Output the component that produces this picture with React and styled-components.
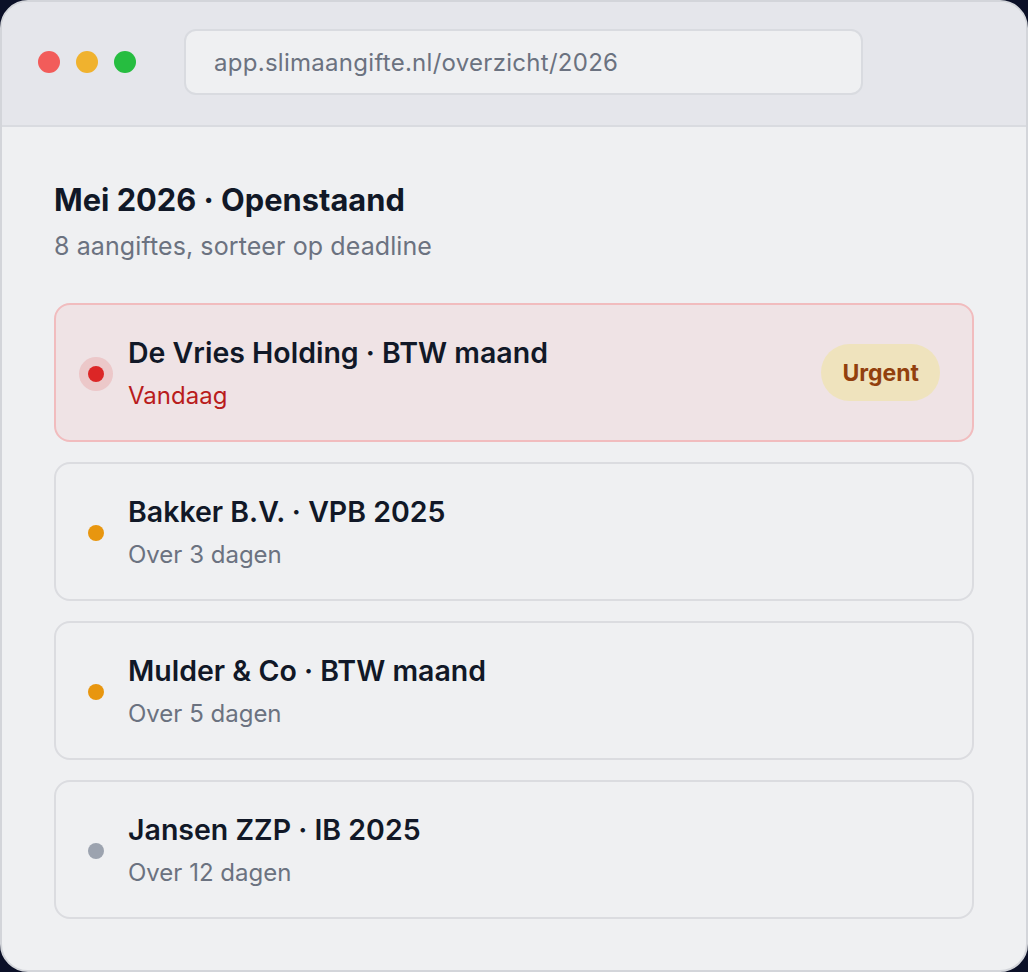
import styled, { createGlobalStyle } from 'styled-components';

const GlobalStyle = createGlobalStyle`
  * { box-sizing: border-box; }
  html, body { margin: 0; padding: 0; background: #0b1027; }
  body { font-family: Inter, 'Noto Sans', sans-serif; }
`;

const Window = styled.div`
  width: 1028px;
  height: 972px;
  display: flex;
  flex-direction: column;
  border: 2px solid #d3d5da;
  border-radius: 28px;
  overflow: hidden;
  background: #eff0f2;
`;

const TitleBar = styled.div`
  height: 125px;
  flex-shrink: 0;
  display: flex;
  align-items: center;
  gap: 48px;
  padding: 0 36px 3px;
  background: #e5e6eb;
  border-bottom: 2px solid #d9dbe0;
`;

const Lights = styled.div`
  display: flex;
  gap: 16px;
`;

const Light = styled.span`
  width: 22px;
  height: 22px;
  border-radius: 50%;
  background: ${p => p.$color};
`;

const UrlBar = styled.div`
  width: 679px;
  height: 66px;
  display: flex;
  align-items: center;
  padding: 0 28px;
  background: #eff0f2;
  border: 2px solid #d9dbe0;
  border-radius: 12px;
  color: #6b7280;
  font-size: 24px;
  letter-spacing: 0.28px;
`;

const Content = styled.main`
  padding: 55px 52px 0 52px;
`;

const Heading = styled.h1`
  margin: 0;
  font-size: 30.8px;
  font-weight: 700;
  line-height: 36px;
  color: #111827;
`;

const Sub = styled.p`
  margin: 13px 0 0;
  font-size: 25px;
  line-height: 30px;
  letter-spacing: 0.1px;
  color: #6b7280;
`;

const List = styled.div`
  margin-top: 42px;
  display: flex;
  flex-direction: column;
  gap: 20px;
`;

const Card = styled.div`
  height: 139px;
  display: flex;
  align-items: center;
  padding: 0 32px 0 23px;
  border-radius: 16px;
  border: 2px solid ${p => (p.$urgent ? '#f1bcbe' : '#dbdce0')};
  background: ${p => (p.$urgent ? '#efe3e5' : '#eff0f2')};
`;

const DotWrap = styled.div`
  width: 34px;
  height: 34px;
  display: flex;
  align-items: center;
  justify-content: center;
  border-radius: 50%;
  background: ${p => (p.$halo ? 'rgba(220, 38, 38, 0.14)' : 'transparent')};
  margin-right: 15px;
  margin-top: 2px;
`;

const Dot = styled.span`
  width: 16px;
  height: 16px;
  border-radius: 50%;
  background: ${p => p.$color};
`;

const Text = styled.div`
  flex: 1;
  display: flex;
  flex-direction: column;
  gap: 11px;
  padding-top: 2px;
`;

const Title = styled.div`
  font-size: 28.5px;
  font-weight: 600;
  line-height: 34px;
  color: #111827;
`;

const When = styled.div`
  font-size: 24px;
  line-height: 30px;
  color: ${p => (p.$urgent ? '#b91c1c' : '#6b7280')};
`;

const Badge = styled.span`
  height: 57px;
  padding: 0 21px;
  display: flex;
  align-items: center;
  border-radius: 29px;
  background: #efe3bd;
  color: #92400e;
  font-size: 23px;
  font-weight: 700;
`;

const items = [
  { title: 'De Vries Holding · BTW maand', when: 'Vandaag', color: '#dc2626', urgent: true },
  { title: 'Bakker B.V. · VPB 2025', when: 'Over 3 dagen', color: '#e8960f' },
  { title: 'Mulder & Co · BTW maand', when: 'Over 5 dagen', color: '#e8960f' },
  { title: 'Jansen ZZP · IB 2025', when: 'Over 12 dagen', color: '#9ca3af' },
];

export default function App() {
  return (
    <>
      <GlobalStyle />
      <Window>
        <TitleBar>
          <Lights>
            <Light $color="#f25c5a" />
            <Light $color="#f0b22e" />
            <Light $color="#26bd40" />
          </Lights>
          <UrlBar>app.slimaangifte.nl/overzicht/2026</UrlBar>
        </TitleBar>
        <Content>
          <Heading>Mei 2026 · Openstaand</Heading>
          <Sub>8 aangiftes, sorteer op deadline</Sub>
          <List>
            {items.map(it => (
              <Card key={it.title} $urgent={it.urgent}>
                <DotWrap $halo={it.urgent}>
                  <Dot $color={it.color} />
                </DotWrap>
                <Text>
                  <Title>{it.title}</Title>
                  <When $urgent={it.urgent}>{it.when}</When>
                </Text>
                {it.urgent && <Badge>Urgent</Badge>}
              </Card>
            ))}
          </List>
        </Content>
      </Window>
    </>
  );
}
